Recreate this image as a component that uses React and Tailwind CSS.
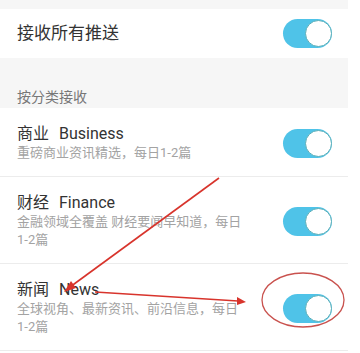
import React from "react";

const font = { fontFamily: '"Roboto", "Noto Sans CJK SC", sans-serif' };

function Toggle() {
  return (
    <div className="relative w-[49px] h-[29px] rounded-full bg-[#4fc3e8] shrink-0">
      <div className="absolute right-0 top-[1px] w-[27px] h-[27px] rounded-full bg-white border border-[#5aaeb8]" />
    </div>
  );
}

function Item({ cn, en, desc }) {
  return (
    <div className="flex items-center justify-between pl-[17px] pr-[16px] pt-[16px] pb-[13px] bg-white border-b border-[#ececec]">
      <div className="w-[232px]">
        <div className="text-[16px] leading-[20px] text-[#333]">
          {cn}
          <span className="ml-[10px]">{en}</span>
        </div>
        <div className="text-[13px] leading-[18.5px] text-[#a3a3a3]">
          {desc}
          <span className="whitespace-nowrap">1-2篇</span>
        </div>
      </div>
      <Toggle />
    </div>
  );
}

export default function App() {
  return (
    <div className="relative w-[360px] h-[353px] bg-white overflow-hidden" style={font}>
      <div className="w-[348px]">
        <div className="h-[9px] bg-[#f6f6f6]" />
        <div className="h-[49px] flex items-center justify-between pl-[17px] pr-[16px] bg-white">
          <span className="text-[17px] text-[#333]">接收所有推送</span>
          <Toggle />
        </div>
        <div className="h-[50px] bg-[#f6f6f6] flex items-end pl-[17px] pb-[1px]">
          <span className="text-[14px] leading-[20px] text-[#777]">按分类接收</span>
        </div>
        <Item cn="商业" en="Business" desc="重磅商业资讯精选，每日" />
        <Item cn="财经" en="Finance" desc="金融领域全覆盖 财经要闻早知道，每日" />
        <Item cn="新闻" en="News" desc="全球视角、最新资讯、前沿信息，每日" />
      </div>
      <svg className="absolute left-0 top-0 pointer-events-none" width="360" height="353">
        <line x1="219" y1="178" x2="70" y2="287" stroke="#d8342c" strokeWidth="1.6" />
        <polygon points="64,292 71,281 76,288" fill="#d8342c" />
        <line x1="95" y1="292" x2="238" y2="301" stroke="#d8342c" strokeWidth="1.6" />
        <polygon points="246,302 237,297 237,305" fill="#d8342c" />
        <ellipse cx="303" cy="300" rx="41" ry="27" fill="none" stroke="#c9524e" strokeWidth="1.3" />
      </svg>
    </div>
  );
}
